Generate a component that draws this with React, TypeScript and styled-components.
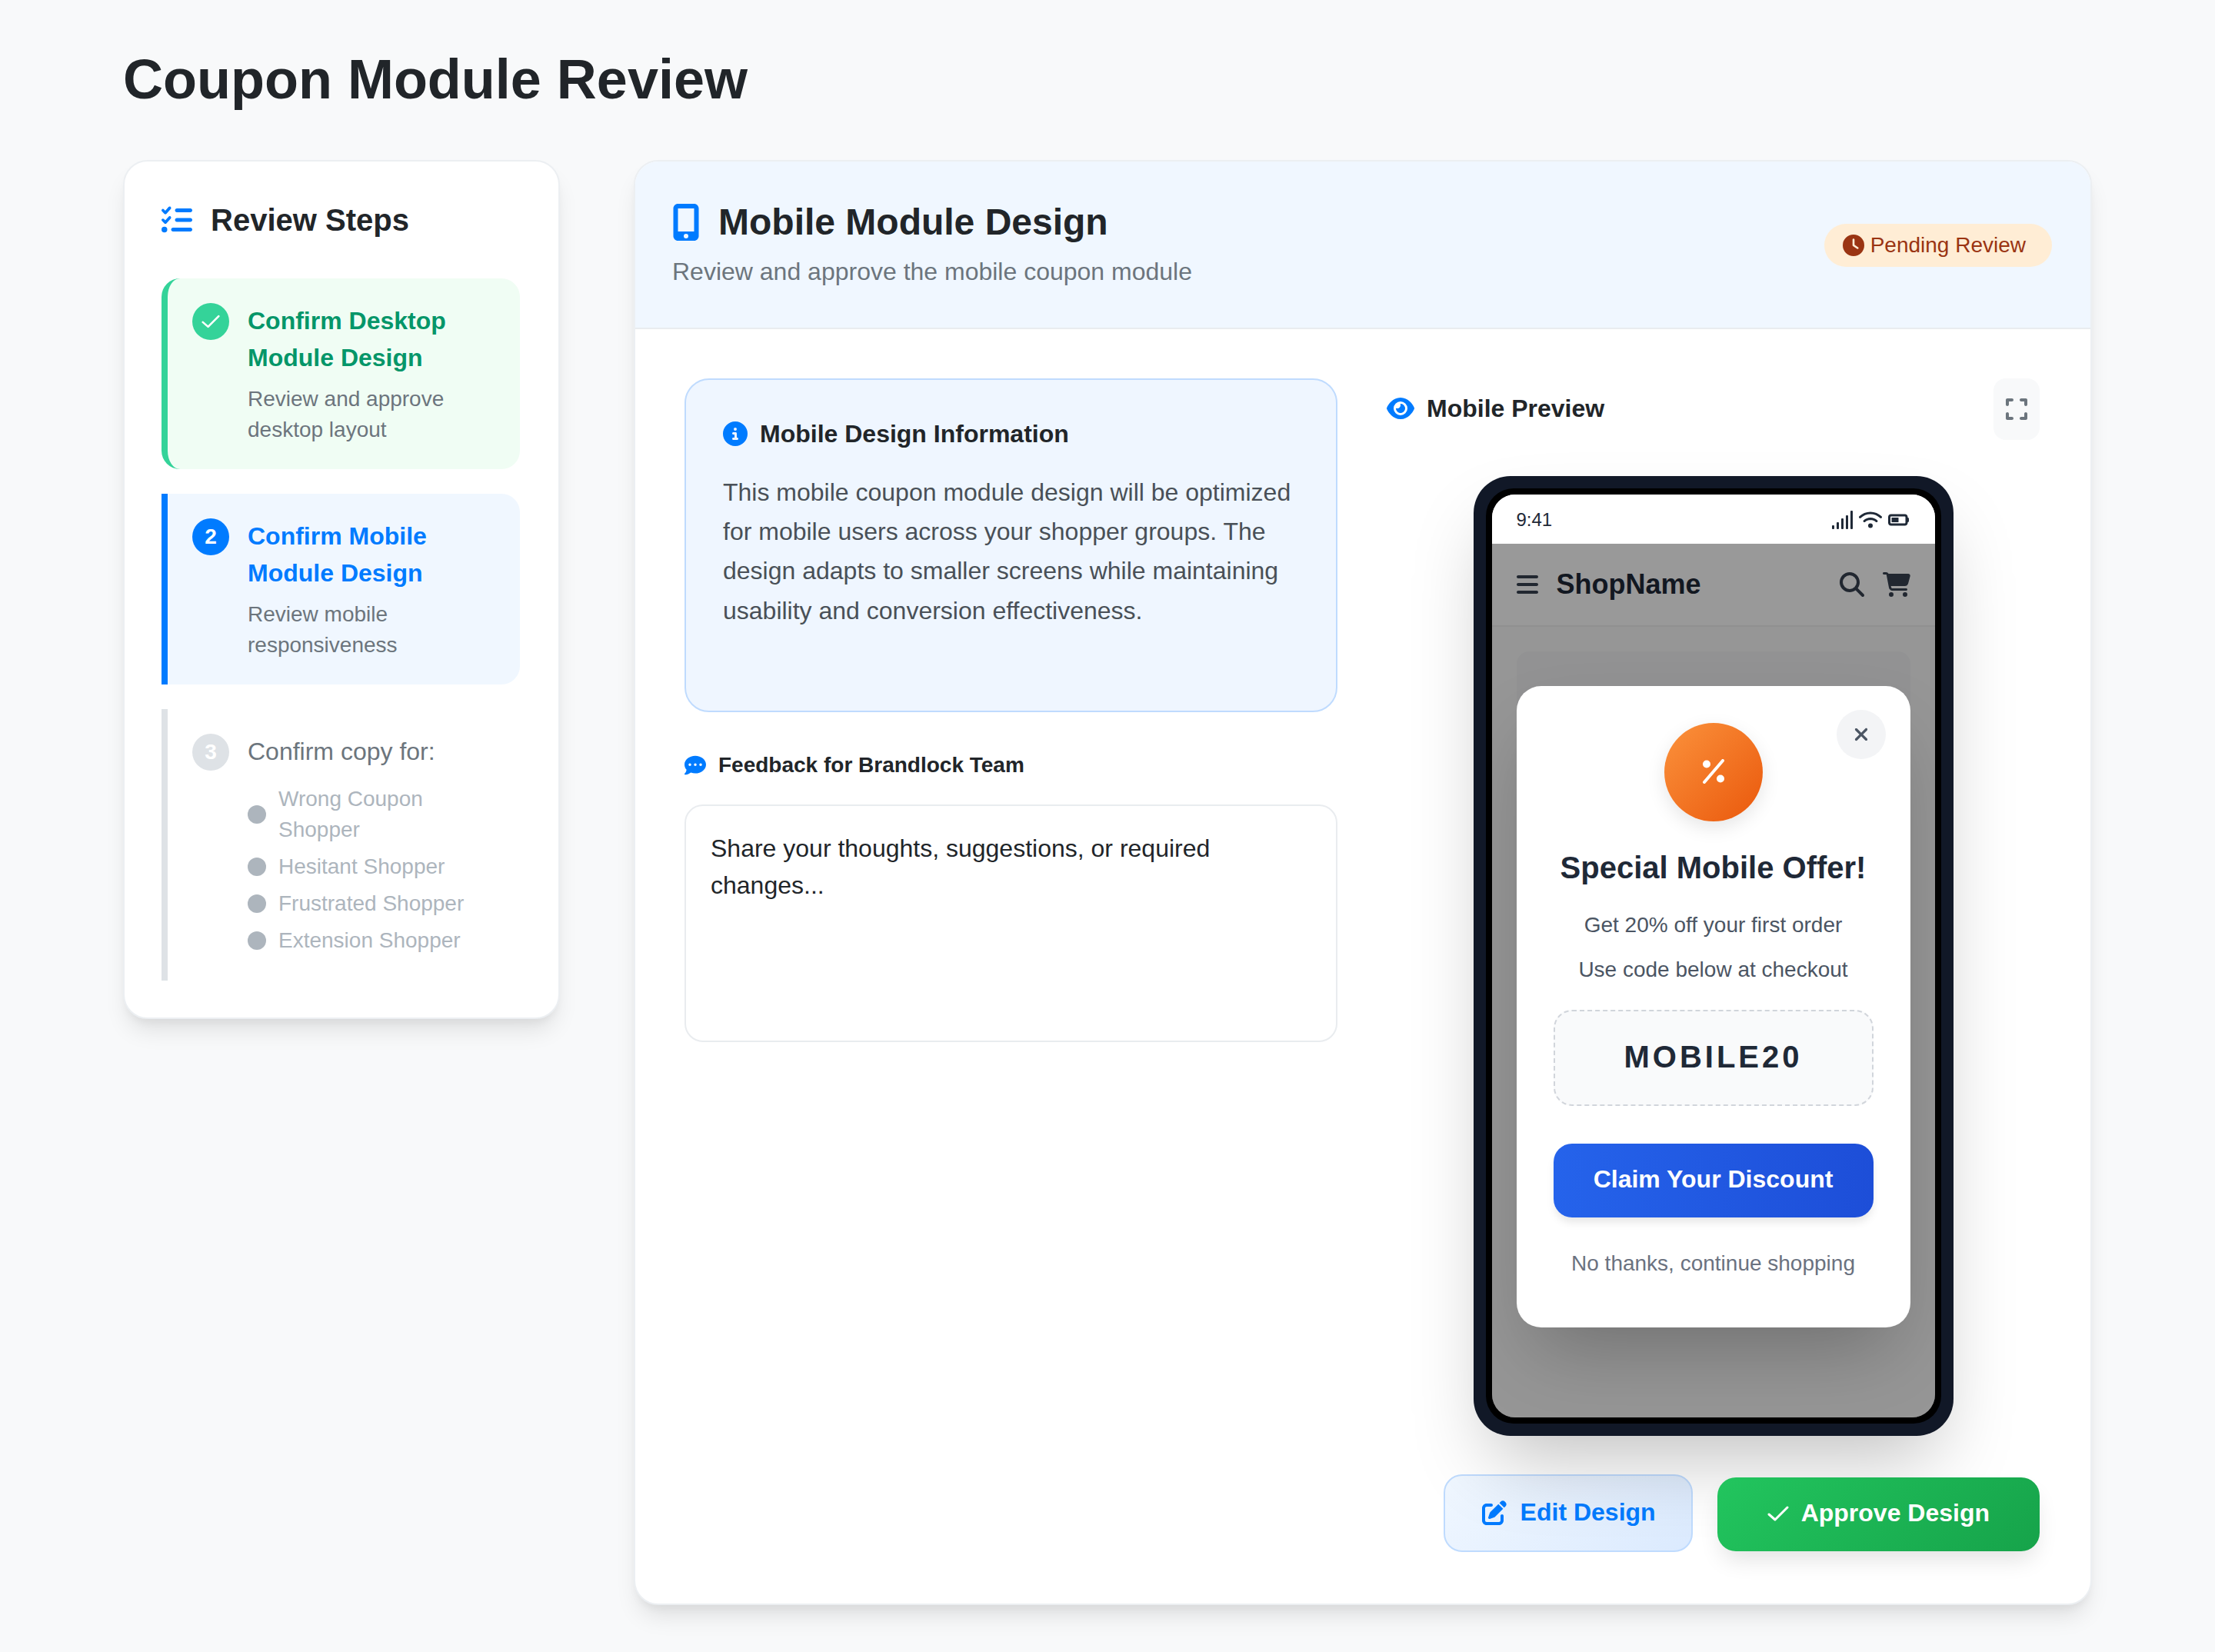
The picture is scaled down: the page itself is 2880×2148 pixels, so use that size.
import React from 'react';
import styled, { createGlobalStyle, css } from 'styled-components';
import {
  FaListCheck,
  FaMobileScreenButton,
  FaClock,
  FaCircleInfo,
  FaCommentDots,
  FaEye,
  FaExpand,
  FaWifi,
  FaBatteryHalf,
  FaBars,
  FaMagnifyingGlass,
  FaCartShopping,
  FaXmark,
  FaPenToSquare,
} from 'react-icons/fa6';

const GlobalStyle = createGlobalStyle`
  * { box-sizing: border-box; }
  html, body {
    margin: 0;
    background: #f8f9fa;
    font-family: "Liberation Sans", Arial, sans-serif;
    color: #212529;
  }
`;

type Tone = 'done' | 'active' | 'todo';

const toneColors = {
  done: { bar: '#34d399', bg: '#f0fdf4', title: '#059669', radius: '24px' },
  active: { bar: '#007bff', bg: '#f0f7ff', title: '#007bff', radius: '0 24px 24px 0' },
  todo: { bar: '#dee2e6', bg: '#ffffff', title: '#6c757d', radius: '0' },
};

const Page = styled.div`
  width: 2880px;
  min-height: 2148px;
  padding: 49px 160px 62px;
`;

const PageTitle = styled.h1`
  margin: 0 0 51px;
  font-size: 72px;
  line-height: 108px;
  font-weight: 700;
  color: #212529;
`;

const Layout = styled.div`
  display: grid;
  grid-template-columns: 568px 1fr;
  gap: 96px;
  align-items: start;
`;

const Sidebar = styled.aside`
  background: #fff;
  border: 2px solid #eceff2;
  border-radius: 32px;
  padding: 46px 50px 48px 48px;
  box-shadow: 0 20px 30px -6px rgba(0, 0, 0, 0.1), 0 8px 12px -4px rgba(0, 0, 0, 0.05);
`;

const SidebarHead = styled.div`
  display: flex;
  align-items: center;
  gap: 24px;
  margin-bottom: 46px;
  color: #007bff;
`;

const SidebarTitle = styled.h2`
  margin: 0;
  font-size: 40px;
  line-height: 60px;
  font-weight: 700;
  color: #212529;
`;

const Steps = styled.div`
  display: flex;
  flex-direction: column;
  gap: 32px;
`;

const Step = styled.div<{ $tone: Tone }>`
  display: flex;
  gap: 24px;
  padding: 32px;
  border-left: 8px solid ${p => toneColors[p.$tone].bar};
  border-radius: ${p => toneColors[p.$tone].radius};
  background: ${p => toneColors[p.$tone].bg};
`;

const StepBadge = styled.div<{ $tone: Tone }>`
  flex: none;
  width: 48px;
  height: 48px;
  border-radius: 50%;
  display: flex;
  align-items: center;
  justify-content: center;
  background: ${p => toneColors[p.$tone].bar};
  color: #fff;
  font-size: 28px;
  font-weight: 700;
`;

const StepBody = styled.div`
  flex: 1;
  min-width: 0;
`;

const StepTitle = styled.div<{ $tone: Tone }>`
  margin-top: -1px;
  font-size: 32px;
  line-height: 48px;
  font-weight: ${p => (p.$tone === 'todo' ? 400 : 700)};
  color: ${p => toneColors[p.$tone].title};
`;

const StepText = styled.div`
  margin: 10px 0 -1px;
  font-size: 28px;
  line-height: 40px;
  color: #6c757d;
`;

const CopyList = styled.ul`
  list-style: none;
  margin: 18px 0 0;
  padding: 0;
  display: flex;
  flex-direction: column;
  gap: 8px;
`;

const CopyItem = styled.li`
  display: flex;
  align-items: center;
  gap: 16px;
  font-size: 28px;
  line-height: 40px;
  color: #adb5bd;

  &::before {
    content: '';
    flex: none;
    width: 24px;
    height: 24px;
    border-radius: 50%;
    background: #adb5bd;
  }
`;

const Main = styled.main`
  background: #fff;
  border: 2px solid #eceff2;
  border-radius: 32px;
  overflow: hidden;
  box-shadow: 0 20px 30px -6px rgba(0, 0, 0, 0.1), 0 8px 12px -4px rgba(0, 0, 0, 0.05);
`;

const MainHead = styled.header`
  display: flex;
  align-items: center;
  justify-content: space-between;
  height: 218px;
  padding: 0 50px 2px 48px;
  background: #f0f7ff;
  border-bottom: 2px solid #e9ecef;
`;

const HeadLine = styled.div`
  display: flex;
  align-items: center;
  gap: 24px;
  color: #007bff;
`;

const MobileIcon = styled(FaMobileScreenButton)`
  width: 36px;
  height: 48px;
`;

const MainTitle = styled.h2`
  margin: 0;
  font-size: 48px;
  line-height: 64px;
  font-weight: 700;
  color: #212529;
`;

const MainSubtitle = styled.p`
  margin: 8px 0 0;
  font-size: 32px;
  line-height: 48px;
  color: #6c757d;
`;

const StatusPill = styled.div`
  display: flex;
  align-items: center;
  gap: 8px;
  height: 56px;
  margin-top: 4px;
  padding: 0 34px 0 24px;
  border-radius: 28px;
  background: #ffedd5;
  color: #9a3412;
  font-size: 28px;
`;

const MainBody = styled.div`
  display: grid;
  grid-template-columns: 1fr 1fr;
  gap: 64px;
  padding: 64px 66px 64px 64px;
`;

const InfoBox = styled.section`
  padding: 46px 48px 104px;
  background: #eff6ff;
  border: 2px solid #bfdbfe;
  border-radius: 32px;
`;

const InfoHead = styled.div`
  display: flex;
  align-items: center;
  gap: 16px;
  color: #007bff;
  margin-bottom: 27px;
`;

const InfoTitle = styled.h3`
  margin: 0;
  font-size: 32px;
  line-height: 48px;
  font-weight: 700;
  color: #212529;
`;

const InfoText = styled.p`
  margin: 0;
  font-size: 32px;
  line-height: 51.2px;
  color: #495057;
`;

const FeedbackLabel = styled.div`
  display: flex;
  align-items: center;
  gap: 16px;
  margin: 48px 0 30px;
  color: #007bff;
`;

const FeedbackTitle = styled.span`
  font-size: 28px;
  line-height: 42px;
  font-weight: 700;
  color: #212529;
`;

const FeedbackField = styled.div`
  height: 309px;
  padding: 31px 32px;
  border: 2px solid #e9ecef;
  border-radius: 24px;
  background: #fff;
  font-size: 32px;
  line-height: 48px;
  color: #212529;
`;

const PreviewHead = styled.div`
  display: flex;
  align-items: center;
  justify-content: space-between;
  height: 80px;
  margin-bottom: 47px;
`;

const PreviewLabel = styled.div`
  display: flex;
  align-items: center;
  gap: 16px;
  padding-bottom: 3px;
  color: #007bff;
`;

const EyeIcon = styled(FaEye)`
  width: 36px;
  height: 32px;
`;

const PreviewTitle = styled.h3`
  margin: 0;
  font-size: 32px;
  line-height: 48px;
  font-weight: 700;
  color: #212529;
`;

const ExpandButton = styled.div`
  width: 60px;
  height: 80px;
  display: flex;
  align-items: center;
  justify-content: center;
  border-radius: 16px;
  background: #f8f9fa;
  color: #6c757d;
`;

const Phone = styled.div`
  position: relative;
  z-index: 1;
  width: 624px;
  height: 1248px;
  margin: 0 auto 50px;
  border-radius: 48px;
  background: #111827;
  padding: 16px;
  box-shadow: 0 50px 100px -24px rgba(0, 0, 0, 0.25);
`;

const PhoneBezel = styled.div`
  height: 100%;
  padding: 8px;
  border-radius: 36px;
  background: #000;
`;

const Screen = styled.div`
  position: relative;
  height: 100%;
  border-radius: 30px;
  overflow: hidden;
  background: #fbfbfb;
`;

const StatusBar = styled.div`
  display: flex;
  align-items: center;
  justify-content: space-between;
  height: 64px;
  padding: 2px 34px 0 32px;
  background: #fff;
  color: #1f2937;
  font-size: 24px;
`;

const StatusIcons = styled.div`
  display: flex;
  align-items: center;
  gap: 8px;
`;

const WifiIcon = styled(FaWifi)`
  width: 30px;
  height: 24px;
`;

const BatteryIcon = styled(FaBatteryHalf)`
  width: 27px;
  height: 24px;
`;

const ShopNav = styled.div`
  display: flex;
  align-items: center;
  justify-content: space-between;
  height: 108px;
  padding: 0 32px;
  background: #fff;
  border-bottom: 2px solid #f0f0f0;
  color: #374151;
`;

const ShopBrand = styled.div`
  display: flex;
  align-items: center;
  gap: 24px;
`;

const MenuIcon = styled(FaBars)`
  width: 28px;
  height: 32px;
`;

const ShopName = styled.span`
  font-size: 36px;
  font-weight: 700;
  color: #1f2937;
`;

const ShopActions = styled.div`
  display: flex;
  align-items: center;
  gap: 24px;
`;

const CartIcon = styled(FaCartShopping)`
  width: 36px;
  height: 32px;
`;

const ScreenBody = styled.div`
  padding: 32px;
`;

const PageBlock = styled.div`
  height: 400px;
  border-radius: 16px;
  background: #f3f4f6;
`;

const Dim = styled.div`
  position: absolute;
  top: 64px;
  left: 0;
  right: 0;
  bottom: 0;
  padding: 185px 32px 0;
  background: rgba(0, 0, 0, 0.4);
`;

const Modal = styled.div`
  position: relative;
  display: flex;
  flex-direction: column;
  align-items: center;
  height: 834px;
  padding: 48px 48px 0;
  border-radius: 32px;
  background: #fff;
  text-align: center;
  box-shadow: 0 50px 100px -24px rgba(0, 0, 0, 0.25);
`;

const CloseButton = styled.div`
  position: absolute;
  top: 31px;
  right: 32px;
  width: 64px;
  height: 64px;
  display: flex;
  align-items: center;
  justify-content: center;
  border-radius: 50%;
  background: #f3f4f6;
  color: #4b5563;
`;

const OfferIcon = styled.div`
  width: 128px;
  height: 128px;
  padding-bottom: 2px;
  display: flex;
  align-items: center;
  justify-content: center;
  border-radius: 50%;
  background: linear-gradient(135deg, #fb923c, #ea580c);
  box-shadow: 0 8px 24px rgba(0, 0, 0, 0.1);
`;

const OfferTitle = styled.h4`
  margin: 30px 0 25px;
  font-size: 40px;
  line-height: 60px;
  font-weight: 700;
  color: #1f2937;
`;

const OfferText = styled.p`
  margin: 0 0 18px;
  font-size: 28px;
  line-height: 40px;
  color: #4b5563;
`;

const CouponCode = styled.div`
  width: 100%;
  height: 125px;
  margin-top: 14px;
  padding-bottom: 3px;
  display: flex;
  align-items: center;
  justify-content: center;
  border: 2px dashed #d1d5db;
  border-radius: 24px;
  background: #f9fafb;
  font-size: 40px;
  font-weight: 700;
  letter-spacing: 4px;
  color: #1f2937;
`;

const ClaimButton = styled.div`
  width: 100%;
  height: 96px;
  margin-top: 49px;
  padding-bottom: 3px;
  display: flex;
  align-items: center;
  justify-content: center;
  border-radius: 24px;
  background: linear-gradient(90deg, #2563eb, #1d4ed8);
  color: #fff;
  font-size: 32px;
  font-weight: 700;
  box-shadow: 0 8px 12px -2px rgba(0, 0, 0, 0.1);
`;

const DeclineLink = styled.div`
  margin-top: 40px;
  font-size: 28px;
  line-height: 40px;
  color: #6b7280;
`;

const Actions = styled.div`
  display: flex;
  align-items: center;
  justify-content: flex-end;
  gap: 32px;
`;

const actionBase = css`
  display: flex;
  align-items: center;
  border-radius: 24px;
  font-size: 32px;
  font-weight: 700;
`;

const EditButton = styled.div`
  ${actionBase}
  gap: 18px;
  height: 101px;
  margin-bottom: 3px;
  padding: 0 46px 2px 48px;
  border: 2px solid #bfdbfe;
  background: linear-gradient(135deg, #f0f7ff, #dbeafe);
  color: #007bff;
`;

const ApproveButton = styled.div`
  ${actionBase}
  position: relative;
  z-index: 2;
  gap: 16px;
  height: 96px;
  padding: 0 65px 3px;
  background: linear-gradient(135deg, #22c55e, #16a34a);
  color: #fff;
  box-shadow: 0 16px 30px -6px rgba(0, 0, 0, 0.12);
`;

// thin tick used in the step badge and on the approve button
const Tick = ({ w, h, sw }: { w: number; h: number; sw: number }) => (
  <svg width={w} height={h} viewBox="0 0 28 20" fill="none" stroke="#fff" strokeWidth={sw} strokeLinecap="round" strokeLinejoin="round">
    <path d="M2 11 L10 18 L26 2" />
  </svg>
);

const PercentMark = () => (
  <svg width="32" height="32" viewBox="0 0 32 32" fill="#fff">
    <circle cx="7" cy="6.5" r="5" />
    <circle cx="25" cy="25.5" r="5" />
    <path d="M4 30 L28 2" stroke="#fff" strokeWidth="4" strokeLinecap="round" />
  </svg>
);

const signalBars = [5, 9, 14, 18, 24];

const SignalMark = () => (
  <svg width="27" height="24" viewBox="0 0 27 24" fill="currentColor">
    {signalBars.map((h, i) => (
      <rect key={h} x={i * 6} y={24 - h} width="3" height={h} rx="1" />
    ))}
  </svg>
);

const shoppers = ['Wrong Coupon Shopper', 'Hesitant Shopper', 'Frustrated Shopper', 'Extension Shopper'];

export default function App() {
  return (
    <Page>
      <GlobalStyle />
      <PageTitle>Coupon Module Review</PageTitle>
      <Layout>
        <Sidebar>
          <SidebarHead>
            <FaListCheck size={40} />
            <SidebarTitle>Review Steps</SidebarTitle>
          </SidebarHead>
          <Steps>
            <Step $tone="done">
              <StepBadge $tone="done">
                <Tick w={24} h={18} sw={3} />
              </StepBadge>
              <StepBody>
                <StepTitle $tone="done">Confirm Desktop Module Design</StepTitle>
                <StepText>Review and approve desktop layout</StepText>
              </StepBody>
            </Step>
            <Step $tone="active">
              <StepBadge $tone="active">2</StepBadge>
              <StepBody>
                <StepTitle $tone="active">Confirm Mobile Module Design</StepTitle>
                <StepText>Review mobile responsiveness</StepText>
              </StepBody>
            </Step>
            <Step $tone="todo">
              <StepBadge $tone="todo">3</StepBadge>
              <StepBody>
                <StepTitle $tone="todo">Confirm copy for:</StepTitle>
                <CopyList>
                  {shoppers.map(name => (
                    <CopyItem key={name}>{name}</CopyItem>
                  ))}
                </CopyList>
              </StepBody>
            </Step>
          </Steps>
        </Sidebar>

        <Main>
          <MainHead>
            <div>
              <HeadLine>
                <MobileIcon />
                <MainTitle>Mobile Module Design</MainTitle>
              </HeadLine>
              <MainSubtitle>Review and approve the mobile coupon module</MainSubtitle>
            </div>
            <StatusPill>
              <FaClock size={28} />
              Pending Review
            </StatusPill>
          </MainHead>

          <MainBody>
            <div>
              <InfoBox>
                <InfoHead>
                  <FaCircleInfo size={32} />
                  <InfoTitle>Mobile Design Information</InfoTitle>
                </InfoHead>
                <InfoText>
                  This mobile coupon module design will be optimized for mobile users across your shopper groups. The
                  design adapts to smaller screens while maintaining usability and conversion effectiveness.
                </InfoText>
              </InfoBox>
              <FeedbackLabel>
                <FaCommentDots size={28} />
                <FeedbackTitle>Feedback for Brandlock Team</FeedbackTitle>
              </FeedbackLabel>
              <FeedbackField>Share your thoughts, suggestions, or required changes...</FeedbackField>
            </div>

            <div>
              <PreviewHead>
                <PreviewLabel>
                  <EyeIcon />
                  <PreviewTitle>Mobile Preview</PreviewTitle>
                </PreviewLabel>
                <ExpandButton>
                  <FaExpand size={32} />
                </ExpandButton>
              </PreviewHead>

              <Phone>
                <PhoneBezel>
                  <Screen>
                    <StatusBar>
                      <span>9:41</span>
                      <StatusIcons>
                        <SignalMark />
                        <WifiIcon />
                        <BatteryIcon />
                      </StatusIcons>
                    </StatusBar>
                    <ShopNav>
                      <ShopBrand>
                        <MenuIcon />
                        <ShopName>ShopName</ShopName>
                      </ShopBrand>
                      <ShopActions>
                        <FaMagnifyingGlass size={32} />
                        <CartIcon />
                      </ShopActions>
                    </ShopNav>
                    <ScreenBody>
                      <PageBlock />
                    </ScreenBody>
                    <Dim>
                      <Modal>
                        <CloseButton>
                          <FaXmark size={26} />
                        </CloseButton>
                        <OfferIcon>
                          <PercentMark />
                        </OfferIcon>
                        <OfferTitle>Special Mobile Offer!</OfferTitle>
                        <OfferText>Get 20% off your first order</OfferText>
                        <OfferText>Use code below at checkout</OfferText>
                        <CouponCode>MOBILE20</CouponCode>
                        <ClaimButton>Claim Your Discount</ClaimButton>
                        <DeclineLink>No thanks, continue shopping</DeclineLink>
                      </Modal>
                    </Dim>
                  </Screen>
                </PhoneBezel>
              </Phone>

              <Actions>
                <EditButton>
                  <FaPenToSquare size={32} />
                  Edit Design
                </EditButton>
                <ApproveButton>
                  <Tick w={28} h={20} sw={3} />
                  Approve Design
                </ApproveButton>
              </Actions>
            </div>
          </MainBody>
        </Main>
      </Layout>
    </Page>
  );
}
